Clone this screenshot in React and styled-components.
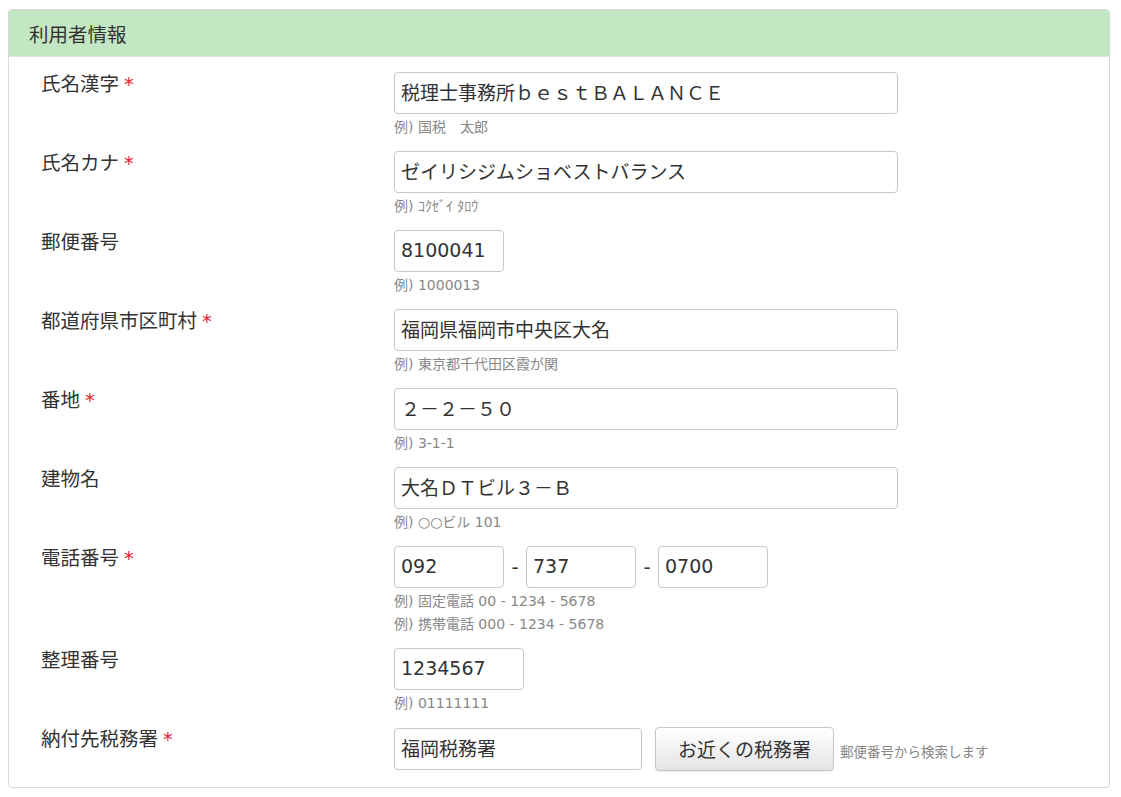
import React from 'react';
import styled, { createGlobalStyle } from 'styled-components';

const GlobalStyle = createGlobalStyle`
  html, body {
    margin: 0;
    padding: 0;
    background: #fff;
    font-family: "DejaVu Sans", "Noto Sans CJK JP", sans-serif;
    color: #333;
  }
`;

const Panel = styled.section`
  margin: 9px 11px 10px 8px;
  border: 1px solid #d9d9d9;
  border-radius: 4px;
  overflow: hidden;
`;

const PanelHeading = styled.h2`
  margin: 0;
  height: 46px;
  padding: 0 20px;
  display: flex;
  align-items: center;
  background: #c3e7c2;
  border-bottom: 1px solid #e2e2e2;
  font-size: 19.5px;
  font-weight: 400;
  color: #333;
`;

const PanelBody = styled.div`
  padding: 15px 16px 16px 32px;
`;

const FormRow = styled.div`
  display: grid;
  grid-template-columns: 353px 1fr;
  margin-bottom: ${(p) => (p.$last ? '0' : '12px')};
`;

const Label = styled.div`
  font-size: 19.5px;
  line-height: 25px;
  color: #333;
`;

const Required = styled.span`
  color: #e8202a;
  margin-left: 5px;
`;

const Field = styled.div`
  display: flex;
  flex-direction: column;
`;

const InputLine = styled.div`
  display: flex;
  align-items: center;
`;

const TextInput = styled.input`
  box-sizing: border-box;
  width: ${(p) => p.$width || 504}px;
  height: 42px;
  padding: 0 0 3px 6px;
  border: 1px solid #c8c8c8;
  border-radius: 4px;
  font-family: inherit;
  font-size: 19px;
  color: #333;
  background: #fff;
  outline: none;
`;

const Dash = styled.span`
  width: 22px;
  text-align: center;
  font-size: 20px;
  color: #333;
`;

const Hint = styled.div`
  margin-top: 2px;
  font-size: 14px;
  line-height: 23px;
  color: #888;
  & + & {
    margin-top: 0;
  }
`;

const SearchButton = styled.button`
  box-sizing: border-box;
  margin-left: 13px;
  width: 179px;
  height: 44px;
  padding-bottom: 2px;
  border: 1px solid #c6c6c6;
  border-radius: 4px;
  background: linear-gradient(to bottom, #ffffff 0%, #e4e4e4 100%);
  box-shadow: 0 1px 1px rgba(0, 0, 0, 0.08);
  font-family: inherit;
  font-size: 19px;
  color: #333;
  cursor: pointer;
`;

const SideNote = styled.span`
  margin-left: 6px;
  margin-top: 4px;
  font-size: 13.5px;
  color: #888;
`;

const rows = [
  { label: '氏名漢字', required: true, value: '税理士事務所ｂｅｓｔＢＡＬＡＮＣＥ', hints: ['例) 国税　太郎'] },
  { label: '氏名カナ', required: true, value: 'ゼイリシジムショベストバランス', hints: ['例) ｺｸｾﾞｲ ﾀﾛｳ'] },
  { label: '郵便番号', value: '8100041', width: 110, hints: ['例) 1000013'] },
  { label: '都道府県市区町村', required: true, value: '福岡県福岡市中央区大名', hints: ['例) 東京都千代田区霞が関'] },
  { label: '番地', required: true, value: '２－２－５０', hints: ['例) 3-1-1'] },
  { label: '建物名', value: '大名ＤＴビル３－Ｂ', hints: ['例) ○○ビル 101'] },
];

function App() {
  return (
    <>
      <GlobalStyle />
      <Panel>
        <PanelHeading>利用者情報</PanelHeading>
        <PanelBody>
          {rows.map((row) => (
            <FormRow key={row.label}>
              <Label>
                {row.label}
                {row.required && <Required>*</Required>}
              </Label>
              <Field>
                <TextInput $width={row.width} defaultValue={row.value} />
                {row.hints.map((h) => (
                  <Hint key={h}>{h}</Hint>
                ))}
              </Field>
            </FormRow>
          ))}

          <FormRow>
            <Label>
              電話番号<Required>*</Required>
            </Label>
            <Field>
              <InputLine>
                <TextInput $width={110} defaultValue="092" />
                <Dash>-</Dash>
                <TextInput $width={110} defaultValue="737" />
                <Dash>-</Dash>
                <TextInput $width={110} defaultValue="0700" />
              </InputLine>
              <Hint>例) 固定電話 00 - 1234 - 5678</Hint>
              <Hint>例) 携帯電話 000 - 1234 - 5678</Hint>
            </Field>
          </FormRow>

          <FormRow>
            <Label>整理番号</Label>
            <Field>
              <TextInput $width={130} defaultValue="1234567" />
              <Hint>例) 01111111</Hint>
            </Field>
          </FormRow>

          <FormRow $last>
            <Label>
              納付先税務署<Required>*</Required>
            </Label>
            <Field>
              <InputLine>
                <TextInput $width={248} defaultValue="福岡税務署" />
                <SearchButton type="button">お近くの税務署</SearchButton>
                <SideNote>郵便番号から検索します</SideNote>
              </InputLine>
            </Field>
          </FormRow>
        </PanelBody>
      </Panel>
    </>
  );
}

export default App;
